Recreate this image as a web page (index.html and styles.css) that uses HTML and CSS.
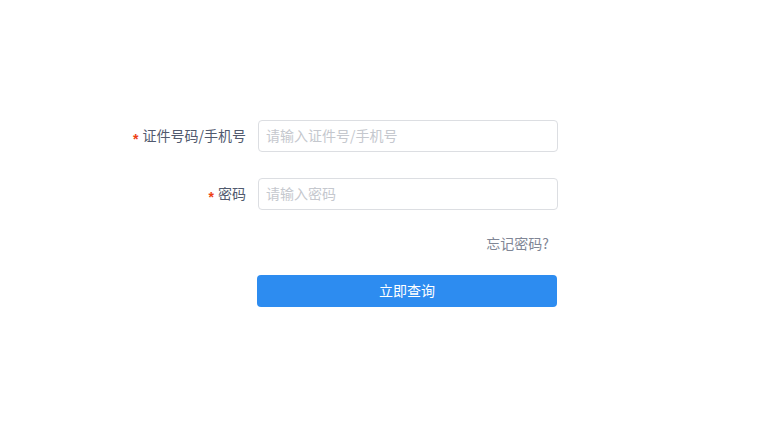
FILE: index.html
```html
<!DOCTYPE html>
<html lang="zh">
<head>
<meta charset="utf-8">
<link rel="stylesheet" href="styles.css">
</head>
<body>
<form class="form">
  <div class="item">
    <label class="label"><span class="req">*</span>证件号码/手机号</label>
    <div class="control"><input class="input" type="text" placeholder="请输入证件号/手机号"></div>
  </div>
  <div class="item item2">
    <label class="label"><span class="req">*</span>密码</label>
    <div class="control"><input class="input" type="password" placeholder="请输入密码"></div>
  </div>
  <div class="forgot-row"><a class="forgot">忘记密码?</a></div>
  <div class="btn-row"><button type="button" class="btn">立即查询</button></div>
</form>
</body>
</html>
```
FILE: styles.css
```css
html, body { margin: 0; padding: 0; background: #fff; }
body {
  font-family: "Noto Sans CJK SC", "Liberation Sans", sans-serif;
  font-size: 14px;
  color: #515a6e;
  width: 780px;
  height: 424px;
}
.form { padding-top: 120px; padding-left: 98px; width: 460px; }
.item { display: flex; align-items: center; height: 32px; }
.item2 { margin-top: 26px; }
.label {
  width: 160px;
  box-sizing: border-box;
  padding-right: 12px;
  text-align: right;
  white-space: nowrap;
  line-height: 30px;
  height: 32px;
  color: #515a6e;
}
.req {
  color: #ed4014;
  margin-right: 4px;
  font-family: "Liberation Sans", sans-serif;
  font-weight: bold;
  vertical-align: -3px;
}
.control { width: 300px; }
.input {
  display: block;
  box-sizing: border-box;
  width: 300px;
  height: 32px;
  border: 1px solid #dcdee2;
  border-radius: 4px;
  padding: 0 7px 2px;
  font-family: inherit;
  font-size: 14px;
  color: #515a6e;
  outline: none;
}
.input::placeholder { color: #c5c8ce; }
.forgot-row { margin-top: 18px; margin-left: 160px; width: 300px; text-align: right; line-height: 30px; height: 30px; }
.forgot { color: #808695; padding-right: 9px; cursor: pointer; }
.btn-row { margin-top: 17px; margin-left: 159px; }
.btn {
  display: block;
  width: 300px;
  height: 32px;
  border: none;
  border-radius: 4px;
  background: #2d8cf0;
  color: #fff;
  font-family: inherit;
  font-size: 14px;
  padding: 0 0 2px;
}
```
